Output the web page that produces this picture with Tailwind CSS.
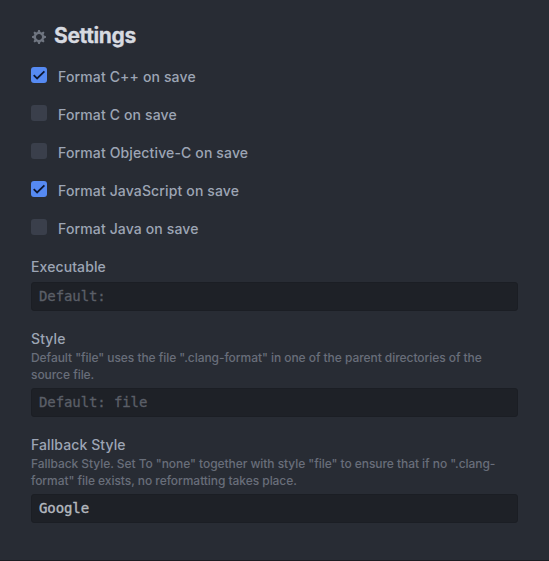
<!DOCTYPE html>
<html lang="en">
<head>
<meta charset="utf-8">
<title>Settings</title>
<script src="https://cdn.jsdelivr.net/npm/@tailwindcss/browser@4"></script>
</head>
<body class="h-[561px] w-[549px] overflow-hidden border-b border-[#1b1d23] bg-[#282c34] px-[31px] pt-5 font-['Inter',sans-serif] text-[#9da5b4]">
  <h1 class="flex h-8 items-center text-[21px] font-bold tracking-[-0.35px] text-[#d7dae0]">
    <svg class="mt-0.5 mr-2 ml-px h-4 w-[14px] shrink-0" viewBox="0 0 14 16" fill="#6f7580"><path fill-rule="evenodd" d="M14 8.77v-1.6l-1.94-.64-.45-1.09.88-1.84-1.13-1.13-1.81.91-1.09-.45-.69-1.92h-1.6l-.63 1.94-1.11.45-1.84-.88-1.13 1.13.91 1.81-.45 1.09L0 7.23v1.59l1.94.64.45 1.09-.88 1.84 1.13 1.13 1.81-.91 1.09.45.69 1.92h1.59l.63-1.94 1.11-.45 1.84.88 1.13-1.13-.92-1.81.47-1.09L14 8.75v.02zM7 11c-1.66 0-3-1.34-3-3s1.34-3 3-3 3 1.34 3 3-1.34 3-3 3z"/></svg>
    <span class="[-webkit-text-stroke:0.3px]">Settings</span>
  </h1>
  <div class="mt-[15px] flex flex-col gap-[18px] text-[14px] leading-5 font-medium tracking-[0.14px]">
    <label class="flex h-5"><span class="mr-[11px] flex size-4 rounded-[3px] bg-[#568af2]"><svg class="size-4" viewBox="0 0 16 16" fill="none" stroke="#0d1730" stroke-width="1.8"><path d="M2.7 8.2 6.1 11.4 13.4 4.4"/></svg></span><span>Format C++ on save</span></label>
    <label class="flex h-5"><span class="mr-[11px] size-4 rounded-[3px] bg-[#3a3f4b]"></span><span>Format C on save</span></label>
    <label class="flex h-5"><span class="mr-[11px] size-4 rounded-[3px] bg-[#3a3f4b]"></span><span>Format Objective-C on save</span></label>
    <label class="flex h-5"><span class="mr-[11px] flex size-4 rounded-[3px] bg-[#568af2]"><svg class="size-4" viewBox="0 0 16 16" fill="none" stroke="#0d1730" stroke-width="1.8"><path d="M2.7 8.2 6.1 11.4 13.4 4.4"/></svg></span><span>Format JavaScript on save</span></label>
    <label class="flex h-5"><span class="mr-[11px] size-4 rounded-[3px] bg-[#3a3f4b]"></span><span>Format Java on save</span></label>
  </div>
  <section class="mt-[18px]">
    <h2 class="h-[25px] text-[14px] leading-5 font-medium tracking-[0.1px]">Executable</h2>
    <div class="h-[29px] w-[487px] rounded-[3px] border border-[#1b1e24] bg-[#1e2127] px-[7px] font-['DejaVu_Sans_Mono',monospace] text-[14px] leading-[27px] tracking-[-0.1px] text-[#5b5f67] [-webkit-text-stroke:0.3px]">Default:</div>
  </section>
  <section class="mt-[18px]">
    <h2 class="h-5 text-[14px] leading-5 font-medium tracking-[0.1px]">Style</h2>
    <p class="h-[39px] text-[12px] leading-[17px] font-medium tracking-[-0.055px] whitespace-nowrap text-[#686e7a]">Default "file" uses the file ".clang-format" in one of the parent directories of the<br>source file.</p>
    <div class="h-[29px] w-[487px] rounded-[3px] border border-[#1b1e24] bg-[#1e2127] px-[7px] font-['DejaVu_Sans_Mono',monospace] text-[14px] leading-[27px] tracking-[-0.1px] text-[#5b5f67] [-webkit-text-stroke:0.3px]">Default: file</div>
  </section>
  <section class="mt-[18px]">
    <h2 class="h-5 text-[14px] leading-5 font-medium tracking-[0.1px]">Fallback Style</h2>
    <p class="h-[39px] text-[12px] leading-[17px] font-medium tracking-[-0.055px] whitespace-nowrap text-[#686e7a]">Fallback Style. Set To "none" together with style "file" to ensure that if no ".clang-<br>format" file exists, no reformatting takes place.</p>
    <div class="h-[29px] w-[487px] rounded-[3px] border border-[#1b1e24] bg-[#1e2127] px-[7px] font-['DejaVu_Sans_Mono',monospace] text-[14px] leading-[27px] tracking-[-0.1px] text-[#b4b8bf] [-webkit-text-stroke:0.4px]">Google</div>
  </section>
</body>
</html>
